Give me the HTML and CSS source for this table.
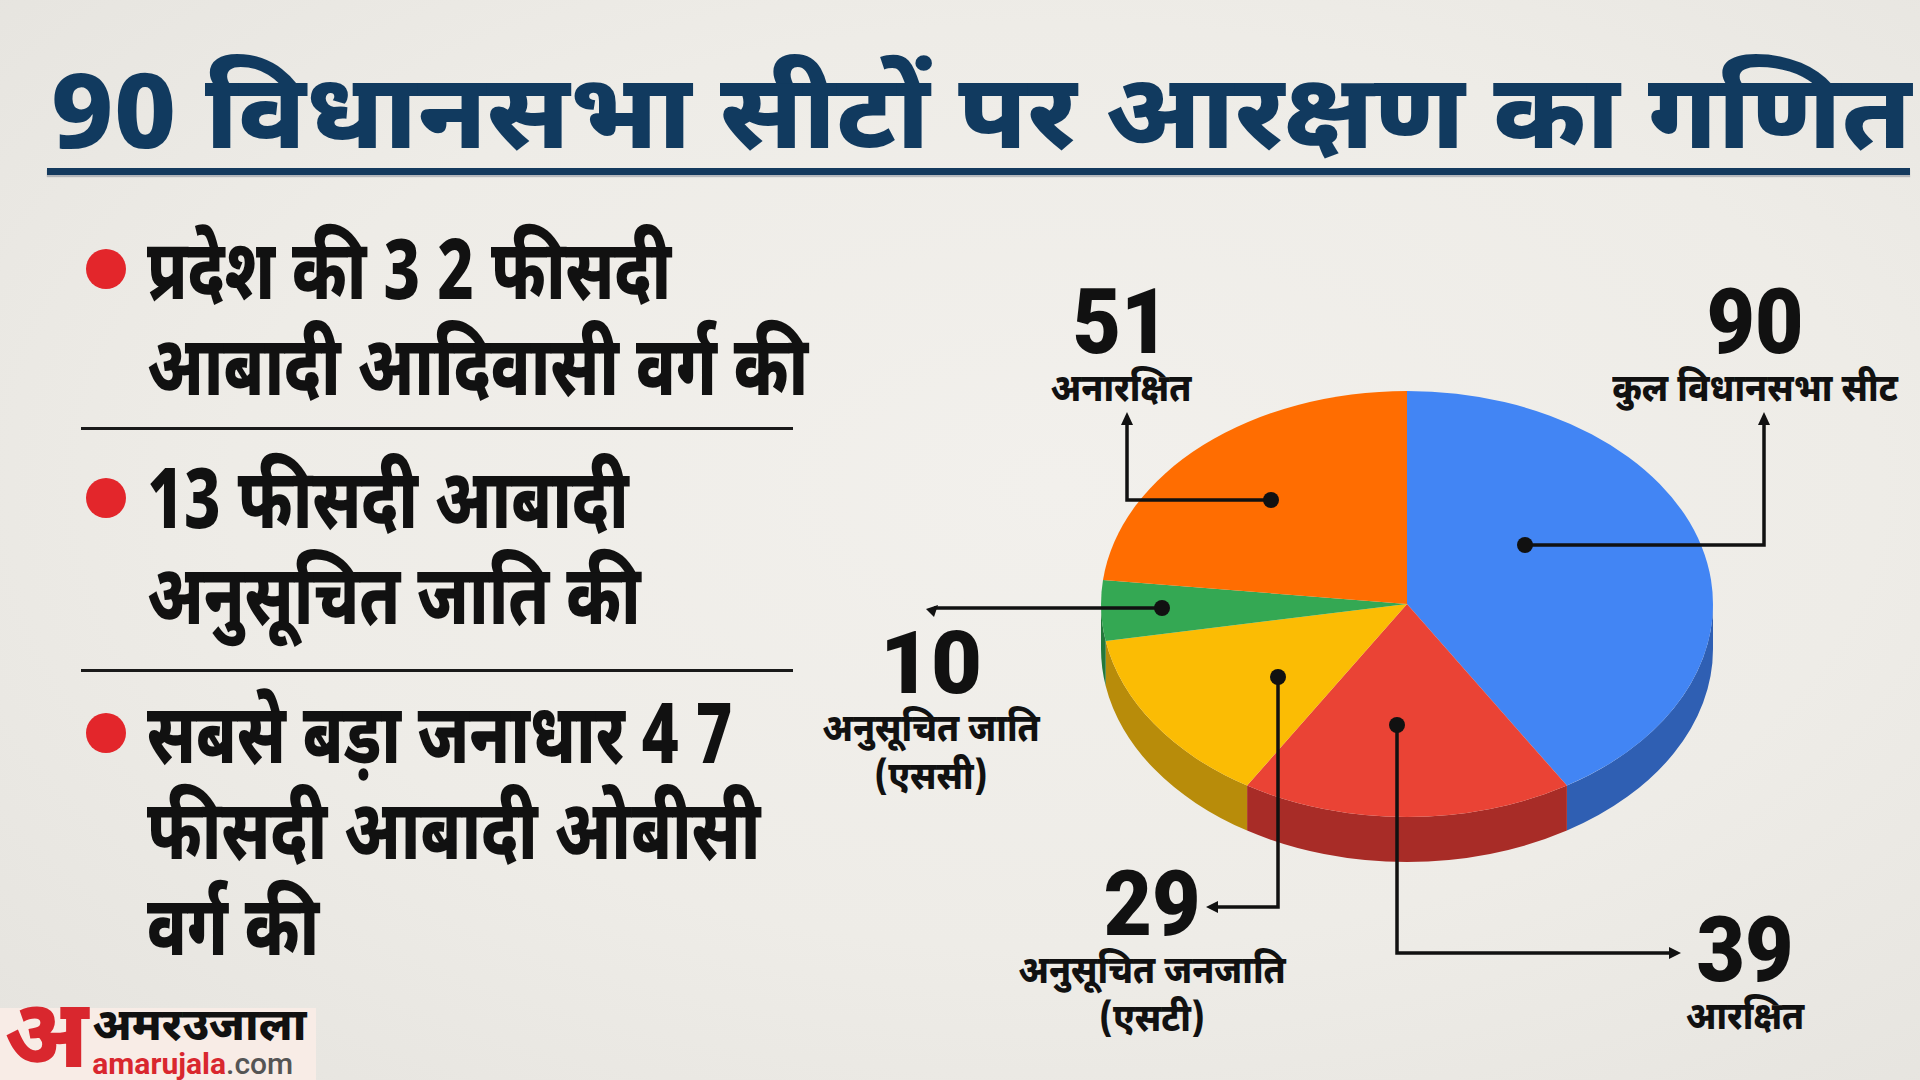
FILE: index.html
```html
<!DOCTYPE html>
<html lang="hi">
<head>
<meta charset="utf-8">
<title>90 विधानसभा सीटों पर आरक्षण का गणित</title>
<link rel="stylesheet" href="styles.css">
</head>
<body>
<div class="page">
  <header class="header">
    <h1 class="title"><span class="cond title-text">90 विधानसभा सीटों पर आरक्षण का गणित</span></h1>
    <div class="rule"></div>
  </header>
  <main class="main">
    <section class="left">
      <ul class="points">
        <li class="point p1"><span class="dot"></span><div class="lines"><span class="cond">प्रदेश की 3 2 फीसदी</span><br><span class="cond">आबादी आदिवासी वर्ग की</span></div></li>
        <li class="point p2"><span class="dot"></span><div class="lines"><span class="cond">13 फीसदी आबादी</span><br><span class="cond">अनुसूचित जाति की</span></div></li>
        <li class="point p3"><span class="dot"></span><div class="lines"><span class="cond">सबसे बड़ा जनाधार 4 7</span><br><span class="cond">फीसदी आबादी ओबीसी</span><br><span class="cond">वर्ग की</span></div></li>
      </ul>
      <div class="logo">
        <span class="logo-a">अ</span>
        <div class="logo-words">
          <span class="logo-hi">अमरउजाला</span>
          <span class="logo-en">amarujala<span class="logo-com">.com</span></span>
        </div>
      </div>
    </section>
    <section class="chart">
      <svg class="pie" width="1100" height="900" viewBox="820 180 1100 900" xmlns="http://www.w3.org/2000/svg">
        <path d="M1713 604 A306 213 0 0 1 1566.9 785.6 L1566.9 830.6 A306 213 0 0 0 1713 649 Z" fill="#2f5fb3"/>
        <path d="M1566.9 785.6 A306 213 0 0 1 1247.1 785.6 L1247.1 830.6 A306 213 0 0 0 1566.9 830.6 Z" fill="#a82c27"/>
        <path d="M1247.1 785.6 A306 213 0 0 1 1105.7 641 L1105.7 686 A306 213 0 0 0 1247.1 830.6 Z" fill="#b88c0a"/>
        <path d="M1105.7 641 A306 213 0 0 1 1101 604 L1101 649 A306 213 0 0 0 1105.7 686 Z" fill="#23783b"/>
        <path d="M1407 604 L1407 391 A306 213 0 0 1 1566.9 785.6 Z" fill="#4285f4"/>
        <path d="M1407 604 L1566.9 785.6 A306 213 0 0 1 1247.1 785.6 Z" fill="#ea4335"/>
        <path d="M1407 604 L1247.1 785.6 A306 213 0 0 1 1105.7 641 Z" fill="#fbbc04"/>
        <path d="M1407 604 L1105.7 641 A306 213 0 0 1 1103 579.9 Z" fill="#34a853"/>
        <path d="M1407 604 L1103 579.9 A306 213 0 0 1 1407 391 Z" fill="#ff6d01"/>
        <g fill="none" stroke="#111" stroke-width="3.5">
          <path d="M1271 500 H1127 V422"/>
          <path d="M1525 545 H1764 V422"/>
          <path d="M1162 608 H934"/>
          <path d="M1278 677 V907 H1214"/>
          <path d="M1397 725 V953 H1672"/>
        </g>
        <g fill="#111">
          <circle cx="1271" cy="500" r="8"/>
          <circle cx="1525" cy="545" r="8"/>
          <circle cx="1162" cy="608" r="8"/>
          <circle cx="1278" cy="677" r="8"/>
          <circle cx="1397" cy="725" r="8"/>
          <path d="M1127 412 L1121 425 L1133 425 Z"/>
          <path d="M1764 412 L1758 425 L1770 425 Z"/>
          <path d="M926 609 L938 605 L934 617 Z"/>
          <path d="M1206 907 L1218 901 L1218 913 Z"/>
          <path d="M1681 953 L1669 947 L1669 959 Z"/>
        </g>
      </svg>
      <div class="label l51"><div class="num cond-n">51</div><div class="caps"><div class="cap">अनारक्षित</div></div></div>
      <div class="label l90"><div class="num cond-n">90</div><div class="caps"><div class="cap">कुल विधानसभा सीट</div></div></div>
      <div class="label l10"><div class="num num-wide">10</div><div class="caps"><div class="cap">अनुसूचित जाति</div><div class="cap">(एससी)</div></div></div>
      <div class="label l29"><div class="num cond-n">29</div><div class="caps"><div class="cap">अनुसूचित जनजाति</div><div class="cap">(एसटी)</div></div></div>
      <div class="label l39"><div class="num cond-n">39</div><div class="caps"><div class="cap">आरक्षित</div></div></div>
    </section>
  </main>
</div>
</body>
</html>
```
FILE: styles.css
```css
* { box-sizing: border-box; }
html, body { margin: 0; padding: 0; }
body {
  width: 1920px;
  height: 1080px;
  overflow: hidden;
  font-family: "Noto Sans Devanagari", "Noto Sans", "Lohit Devanagari", sans-serif;
  color: #111;
}
.page {
  width: 1920px;
  height: 1080px;
  background: #eeece7;
  background-image: radial-gradient(ellipse at 55% 45%, #f2f0ec 0%, #eeece7 55%, #e5e3de 100%);
  display: flex;
  flex-direction: column;
}
.cond { display: inline-block; transform-origin: left center; transform: scaleX(0.77); white-space: nowrap; }

.header { height: 180px; padding: 78px 10px 0 47px; }
.title {
  margin: 0;
  padding-left: 4px;
  font-size: 104px;
  line-height: 90px;
  height: 90px;
  font-weight: 800;
  color: #113a5f;
  white-space: nowrap;
}
.title-text { transform: scaleX(1.054); }
.rule { height: 7px; background: #143a5e; box-shadow: 0 2px 1px rgba(80,90,110,0.35); width: 1863px; }

.main { flex: 1; display: grid; grid-template-columns: 820px 1fr; }
.left { display: flex; flex-direction: column; }
.points { list-style: none; margin: 0; padding: 0 0 0 81px; width: 793px; }
.point { display: flex; align-items: flex-start; font-size: 84px; font-weight: 800; line-height: 96px; }
.point .dot { flex: none; width: 40px; height: 40px; border-radius: 50%; background: #e3262b; margin: 18px 21px 0 5px; }
.lines { white-space: nowrap; }
.p1 { padding-top: 51px; padding-bottom: 4px; border-bottom: 3px solid #1a1a1a; }
.p2 { padding-top: 30px; padding-bottom: 17px; border-bottom: 3px solid #1a1a1a; }
.p3 { padding-top: 23px; }

.logo { margin-top: auto; width: 316px; height: 72px; background: #f8ece6; display: flex; align-items: flex-end; padding-left: 4px; }
.logo-a { font-size: 96px; font-weight: 800; color: #d9272e; line-height: 72px; height: 72px; margin-right: 4px; }
.logo-words { display: flex; flex-direction: column; padding-bottom: 2px; }
.logo-hi { font-size: 45px; font-weight: 800; color: #111; line-height: 42px; }
.logo-en { font-family: "Roboto", "Liberation Sans", sans-serif; font-size: 30px; font-weight: 700; color: #d9272e; line-height: 28px; }
.logo-com { color: #555; font-weight: 500; }

.chart { position: relative; }
.pie { position: absolute; left: 0; top: 0; }
.label { position: absolute; transform: translateX(-50%); text-align: center; white-space: nowrap; }
.num { font-family: "Roboto", "Liberation Sans", sans-serif; font-weight: 900; font-size: 90px; line-height: 66px; height: 66px; color: #111; }
.cond-n { transform: scaleX(0.93); }
.num-wide { font-size: 88px; }
.caps { margin-top: 12px; }
.cap { font-size: 38px; font-weight: 800; line-height: 48px; transform: scaleX(0.92); }
.l51 { left: 301px; top: 110px; }
.l90 { left: 935px; top: 110px; }
.l10 { left: 111px; top: 450px; }
.l29 { left: 332px; top: 692px; }
.l39 { left: 925px; top: 738px; }
```
